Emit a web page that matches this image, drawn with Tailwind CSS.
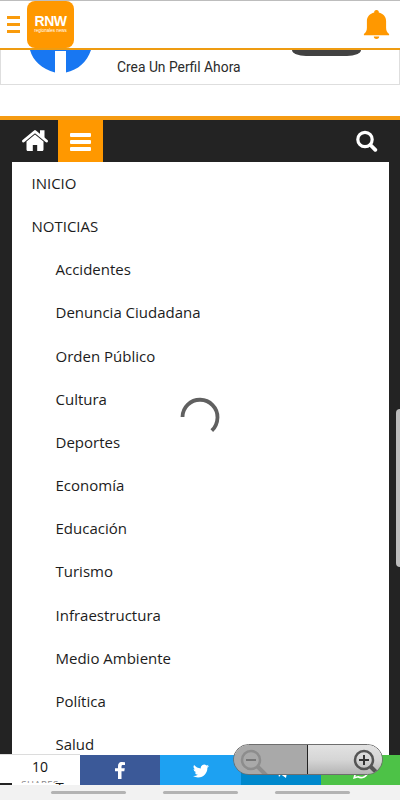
<!DOCTYPE html>
<html lang="es">
<head>
  <meta charset="UTF-8" />
  <meta name="viewport" content="width=device-width, initial-scale=1.0" />
  <title>RNW | Regionales News</title>
  <script src="https://cdn.jsdelivr.net/npm/@tailwindcss/browser@4"></script>
</head>
<body class="bg-white">
  <div class="relative w-[400px] h-[800px] overflow-hidden flex flex-col bg-white font-['Open_Sans',sans-serif]">

    <!-- App header -->
    <header class="h-[50px] shrink-0 flex items-start justify-between border-t border-t-[#bdbdbd] border-b-2 border-b-[#ee9c12] pl-[7px] pr-[10px]">
      <div class="flex">
        <div class="flex flex-col gap-1 mt-[15px] w-[13px]">
          <span class="h-[3px] bg-[#f99b0c]"></span>
          <span class="h-[3px] bg-[#f99b0c]"></span>
          <span class="h-[3px] bg-[#f99b0c]"></span>
        </div>
        <div class="ml-[7px] w-[47px] h-[47px] rounded-lg bg-[#ff9800] flex flex-col items-center pt-[13px] text-white font-['Liberation_Sans',sans-serif]">
          <span class="text-[14px] leading-[14px] font-bold tracking-[-0.5px]">RNW</span>
          <span class="text-[4.5px] leading-[5px] whitespace-nowrap">regionales news</span>
        </div>
      </div>
      <svg class="mt-2 w-[27px] h-[31px]" viewBox="0 0 27 31" fill="#ff9800">
        <path d="M13.5 1a2.300 2.300 0 0 1 2.300 2.500c4.300 1 7.300 4.200 7.300 8.500v6.800c0 3 .9 4.500 3 6.200v1.200H.9V25c2.100-1.700 3-3.200 3-6.200V12c0-4.300 3-7.500 7.300-8.500A2.300 2.300 0 0 1 13.500 1z" />
        <path d="M10.800 27.500h5.400a2.700 2.500 0 0 1-5.400 0z" />
      </svg>
    </header>

    <!-- Ad banner -->
    <div class="h-[35px] shrink-0 flex border-x border-b border-[#dedede]">
      <svg class="w-[62px] h-6 ml-[29px]" viewBox="0 0 62 24">
        <path d="M0 0h61C57 12 48 20 36 22.500V1H25v21.500C12 19 3 11 0 0z" fill="#1877f2" />
      </svg>
      <p class="ml-[25px] mt-[9px] w-[124px] text-[13.85px] leading-4 whitespace-nowrap text-[#2b2b2b] font-[Roboto,sans-serif]">Crea Un Perfil Ahora</p>
      <div class="ml-[51px] w-[69px] h-[6px] rounded-b-[14px_6px] bg-[#424242]"></div>
    </div>

    <!-- Site navigation -->
    <div class="mt-[31px] grow flex flex-col border-t-4 border-[#f59b12] bg-[#232323]">
      <nav class="h-[42px] shrink-0 flex pl-[22px]">
        <svg class="mt-[9px] w-[26px] h-[23px]" viewBox="0 0 26 23" fill="#fff">
          <path d="M13 5.500 21.500 12.500v8c0 .9-.5 1.500-1.400 1.500h-4.900v-6h-4.400v6H5.900c-.9 0-1.400-.6-1.400-1.500v-8z" />
          <path d="M1.500 12 13 2.500 24.500 12" fill="none" stroke="#fff" stroke-width="2.900" stroke-linecap="round" stroke-linejoin="round" />
          <path d="M18 1.300h4.500v9l-4.500-4z" />
        </svg>
        <div class="ml-[10px] w-[45px] bg-[#ff9800] flex flex-col items-center pt-[13px] gap-[3px]">
          <span class="w-[21px] h-[4px] rounded-[1px] bg-white"></span>
          <span class="w-[21px] h-[4px] rounded-[1px] bg-white"></span>
          <span class="w-[21px] h-[4px] rounded-[1px] bg-white"></span>
        </div>
        <svg class="ml-auto mr-[22px] mt-[10px] w-[22px] h-[22px]" viewBox="0 0 22 22" fill="none" stroke="#fff">
          <circle cx="9" cy="9.500" r="7.200" stroke-width="3.200" />
          <path d="m14.500 15 4.800 4.800" stroke-width="3.800" stroke-linecap="round" />
        </svg>
      </nav>
      <ul class="mx-[12px] mr-[11px] h-0 grow overflow-hidden bg-white pl-[19.500px] text-[15px] leading-[43.15px] text-[#1c1c1c]">
        <li>INICIO</li>
        <li>NOTICIAS
          <ul class="pl-[24px]">
            <li>Accidentes</li>
            <li>Denuncia Ciudadana</li>
            <li>Orden Público</li>
            <li>Cultura</li>
            <li>Deportes</li>
            <li>Economía</li>
            <li>Educación</li>
            <li>Turismo</li>
            <li>Infraestructura</li>
            <li>Medio Ambiente</li>
            <li>Política</li>
            <li>Salud</li>
            <li>Tecnología</li>
          </ul>
        </li>
      </ul>
    </div>

    <!-- Loading spinner -->
    <svg class="absolute left-[180px] top-[397px] w-10 h-10" viewBox="0 0 40 40" fill="none" stroke="#606060" stroke-width="3.800">
      <path d="M2.500 20A17.500 17.500 0 0 1 37.500 20.500C37.300 26 35.400 30.300 31.800 33.700" />
    </svg>

    <!-- Scroll handle -->
    <div class="absolute left-[396px] top-[409px] w-3 h-[158px] rounded bg-[#bdbdbd]"></div>

    <!-- Share bar -->
    <div class="absolute left-0 bottom-[15px] w-full h-[31px] flex items-stretch">
      <div class="w-[80px] h-[29px] border-t border-[#dcdcdc] bg-white overflow-hidden text-center">
        <p class="mt-[3px] text-[14px] leading-[18px] text-[#111]">10</p>
        <p class="mt-[3px] text-[9.500px] leading-[11px] tracking-[0.5px] text-[#888]">SHARES</p>
      </div>
      <div class="w-[80px] mt-px bg-[#3b5998] flex justify-center items-center">
        <svg class="w-[10px] h-[17px] mt-px" viewBox="0 0 10 17" fill="#fff">
          <path d="M3 17V9.300H0V6.200h3V4c0-2.700 1.500-4 4-4l3 .2v2.900H8C6.800 3.100 6.500 3.600 6.500 4.600v1.600h3.300l-.5 3.100H6.500V17z" />
        </svg>
      </div>
      <div class="w-[81px] mt-px bg-[#1da1f2] flex justify-center items-center">
        <svg class="w-[16px] h-[16px] mt-[2px]" viewBox="0 0 24 24" fill="#fff">
          <path d="M23.950 4.570a10 10 0 0 1-2.820.77 4.960 4.960 0 0 0 2.160-2.720c-.95.550-2 .95-3.130 1.180a4.920 4.920 0 0 0-8.380 4.480C7.690 8.090 4.070 6.130 1.640 3.160a4.920 4.920 0 0 0 1.520 6.570 4.900 4.900 0 0 1-2.230-.61v.06a4.920 4.920 0 0 0 3.950 4.830 5 5 0 0 1-2.210.08 4.940 4.940 0 0 0 4.600 3.420A9.870 9.870 0 0 1 0 19.540a13.990 13.990 0 0 0 7.550 2.210c9.050 0 14-7.500 14-13.980 0-.21 0-.42-.02-.63a9.940 9.940 0 0 0 2.460-2.550z" />
        </svg>
      </div>
      <div class="w-[80px] mt-px bg-[#0088cc] flex justify-center items-center">
        <svg class="w-4 h-4 mt-px" viewBox="0 0 16 16" fill="#fff">
          <path d="M0 7.500 15.500 1 13 15 8 11.500 6 14 5 9.500l7-6-9 5.500z" />
        </svg>
      </div>
      <div class="w-[79px] mt-px bg-[#4dc247] flex justify-center items-center">
        <svg class="w-4 h-4 mt-px" viewBox="0 0 16 16" fill="none" stroke="#fff" stroke-width="1.600">
          <path d="M1.200 14.800 2.300 11A6.600 6.600 0 1 1 5 13.800z" />
        </svg>
      </div>
    </div>

    <!-- Zoom controls -->
    <div class="absolute left-[233px] top-[744px] w-[150px] h-[31px] rounded-full border border-[#6e6e6e] overflow-hidden flex">
      <div class="w-[74px] border-r border-[#222] bg-[#a9a9a9]">
        <svg class="ml-[6px] mt-[4px] w-[29px] h-[27px]" viewBox="0 0 29 27" fill="none" stroke="#8d8d8d">
          <circle cx="11" cy="11" r="9" stroke-width="2.500" />
          <path d="M6 11h10" stroke="#777" stroke-width="2" />
          <path d="m17.500 17.500 9 9" stroke-width="4" />
        </svg>
      </div>
      <div class="grow bg-linear-to-b from-[#e2e2e2] via-[#d6d6d6] to-[#b5b5b5]">
        <svg class="ml-[44px] mt-[4px] w-[29px] h-[27px]" viewBox="0 0 29 27" fill="none" stroke="#555">
          <circle cx="12" cy="11" r="9" stroke-width="2.500" />
          <path d="M7 11h10M12 6v10" stroke="#333" stroke-width="2" />
          <path d="m18.500 17.500 6 6" stroke-width="4" />
        </svg>
      </div>
    </div>

    <!-- System gesture bar -->
    <div class="absolute left-0 bottom-0 w-full h-[15px] bg-[#f2f2f2] flex justify-center gap-[37px] pt-[6px]">
      <span class="w-[75px] h-[3px] rounded-full bg-[#b3b3b3]"></span>
      <span class="w-[75px] h-[3px] rounded-full bg-[#b3b3b3]"></span>
      <span class="w-[75px] h-[3px] rounded-full bg-[#b3b3b3]"></span>
    </div>
  </div>
</body>
</html>
